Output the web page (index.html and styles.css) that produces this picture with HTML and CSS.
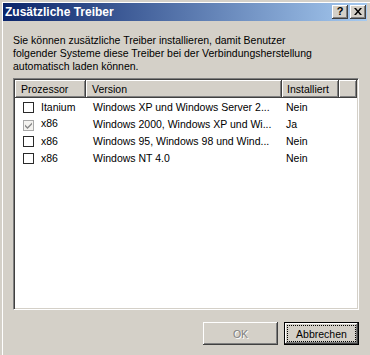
FILE: index.html
```html
<!DOCTYPE html>
<html lang="de">
<head>
    <meta charset="UTF-8">
    <title>Zusätzliche Treiber</title>
    <link rel="stylesheet" href="styles.css">
</head>
<body>

    <!-- Dialog window -->
    <div class="window">
        <div class="titlebar">
            <span class="title">Zusätzliche Treiber</span>
            <div class="caption-buttons">
                <span class="cap-btn help">?</span>
                <span class="cap-btn close">
                    <svg width="8" height="7" viewBox="0 0 8 7">
                        <path d="M0 0h2l2 2.5L6 0h2L5 3.5 8 7H6L4 4.5 2 7H0l3-3.5z" fill="#000"/>
                    </svg>
                </span>
            </div>
        </div>

        <div class="dialog-body">
            <p class="intro">
                Sie können zusätzliche Treiber installieren, damit Benutzer<br>
                folgender Systeme diese Treiber bei der Verbindungsherstellung<br>
                automatisch laden können.
            </p>

            <!-- Driver list -->
            <div class="listview">
                <table class="drivers">
                    <colgroup>
                        <col class="col-cpu">
                        <col class="col-version">
                        <col class="col-installed">
                        <col>
                    </colgroup>
                    <thead>
                        <tr>
                            <th>Prozessor</th>
                            <th>Version</th>
                            <th>Installiert</th>
                            <th></th>
                        </tr>
                    </thead>
                    <tbody>
                        <tr>
                            <td><span class="check"></span>Itanium</td>
                            <td>Windows XP und Windows Server 2...</td>
                            <td>Nein</td>
                            <td></td>
                        </tr>
                        <tr>
                            <td><span class="check checked">
                                <svg width="7" height="7" viewBox="0 0 7 7">
                                    <path d="M0 2.5l2.5 2.5L7 0.5v2L2.5 7 0 4.5z" fill="#8a8a8a"/>
                                </svg>
                            </span>x86</td>
                            <td>Windows 2000, Windows XP und Wi...</td>
                            <td>Ja</td>
                            <td></td>
                        </tr>
                        <tr>
                            <td><span class="check"></span>x86</td>
                            <td>Windows 95, Windows 98 und Wind...</td>
                            <td>Nein</td>
                            <td></td>
                        </tr>
                        <tr>
                            <td><span class="check"></span>x86</td>
                            <td>Windows NT 4.0</td>
                            <td>Nein</td>
                            <td></td>
                        </tr>
                    </tbody>
                </table>
            </div>

            <div class="button-row">
                <button class="btn" disabled>OK</button>
                <button class="btn default"><span class="focus">Abbrechen</span></button>
            </div>
        </div>
    </div>

</body>
</html>
```

FILE: styles.css
```css
body {
    margin: 0;
    padding: 0;
    font-family: 'Liberation Sans', Arial, sans-serif;
    font-size: 10.5px;
    color: #000;
    background-color: #d4d0c8;
}

/* Window frame */
.window {
    width: 370px;
    height: 355px;
    box-sizing: border-box;
    border-top: 2px solid #d4d0c8;
    border-left: 2px solid #d4d0c8;
    padding: 1px 3px 0 1px;
    background-color: #d4d0c8;
    box-shadow: inset 1px 1px 0 #fff;
}

/* Title bar */
.titlebar {
    height: 18px;
    display: flex;
    justify-content: space-between;
    align-items: center;
    padding: 0 1px 0 2px;
    background: linear-gradient(to right, #0a246a, #a6caf0);
}

    .titlebar .title {
        color: #fff;
        font-weight: bold;
        font-size: 12px;
        letter-spacing: 0;
    }

.caption-buttons {
    display: flex;
    gap: 2px;
}

.cap-btn {
    width: 16px;
    height: 14px;
    box-sizing: border-box;
    display: flex;
    align-items: center;
    justify-content: center;
    background-color: #d4d0c8;
    box-shadow: inset -1px -1px 0 #404040, inset 1px 1px 0 #fff, inset -2px -2px 0 #808080;
    font-weight: bold;
    font-size: 11px;
    line-height: 1;
    padding-bottom: 1px;
}

/* Dialog content */
.dialog-body {
    padding: 0 8px 0 10px;
}

.intro {
    margin: 13px 0 5px 0;
    line-height: 13px;
}

.listview {
    height: 232px;
    box-sizing: border-box;
    background-color: #fff;
    border: 1px solid;
    border-color: #808080 #fff #fff #808080;
    box-shadow: inset 1px 1px 0 #404040, inset -1px -1px 0 #d4d0c8;
    padding: 1px;
}

.drivers {
    width: 100%;
    table-layout: fixed;
    border-collapse: separate;
    border-spacing: 0;
}

    .drivers .col-cpu {
        width: 71px;
    }

    .drivers .col-version {
        width: 196px;
    }

    .drivers .col-installed {
        width: 57px;
    }

    .drivers th {
        height: 18px;
        padding: 0 0 0 6px;
        text-align: left;
        font-weight: normal;
        background-color: #d4d0c8;
        box-shadow: inset -1px -1px 0 #404040, inset 1px 1px 0 #fff, inset -2px -2px 0 #808080;
        white-space: nowrap;
    }

    .drivers th:nth-child(3) {
        padding-left: 5px;
    }

    .drivers td {
        height: 17px;
        padding: 0 0 0 7px;
        white-space: nowrap;
        overflow: hidden;
    }

    .drivers tr:first-child td {
        padding-top: 0;
    }

    .drivers td:first-child {
        padding-left: 8px;
    }

    .drivers td:nth-child(3) {
        padding-left: 4px;
    }

.check {
    display: inline-flex;
    align-items: center;
    justify-content: center;
    width: 11px;
    height: 11px;
    box-sizing: border-box;
    border: 1px solid #2a2a2a;
    background-color: #fff;
    vertical-align: -2px;
    margin-right: 7px;
}

    .check.checked {
        border-color: #a8a8a8;
        background-color: #f4f3f0;
    }

/* Dialog buttons */
.button-row {
    display: flex;
    justify-content: flex-end;
    gap: 6px;
    margin-top: 12px;
}

.btn {
    width: 75px;
    height: 23px;
    box-sizing: border-box;
    padding: 0;
    border: none;
    font-family: inherit;
    font-size: 10.5px;
    color: #000;
    background-color: #d4d0c8;
    box-shadow: inset -1px -1px 0 #404040, inset 1px 1px 0 #fff, inset -2px -2px 0 #808080;
}

    .btn:disabled {
        color: #808080;
        text-shadow: 1px 1px 0 #fff;
    }

    .btn.default {
        border: 1px solid #000;
        display: flex;
        align-items: stretch;
        padding: 3px;
    }

    .btn .focus {
        flex: 1;
        display: flex;
        align-items: center;
        justify-content: center;
        outline: 1px dotted #000;
    }
```
